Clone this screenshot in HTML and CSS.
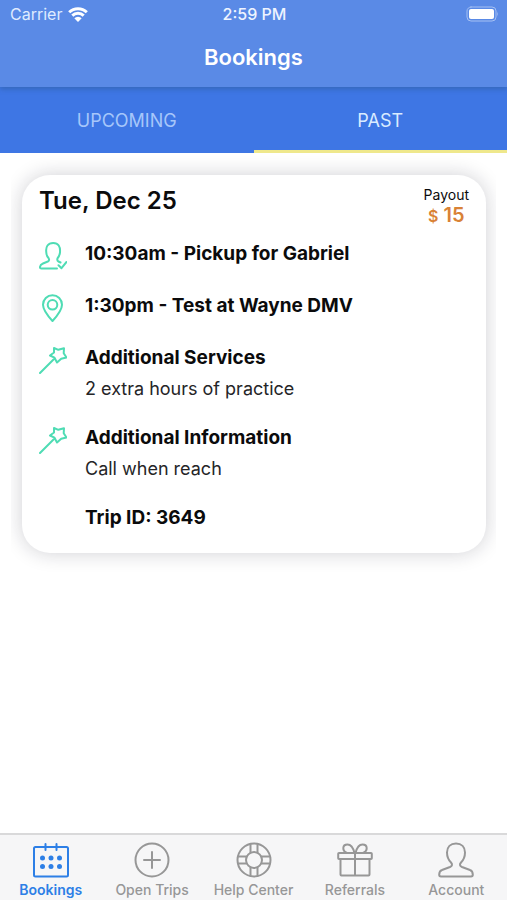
FILE: index.html
```html
<!DOCTYPE html>
<html lang="en">
<head>
<meta charset="utf-8">
<meta name="viewport" content="width=device-width, initial-scale=1">
<title>Bookings</title>
<link rel="stylesheet" href="styles.css">
</head>
<body>
<svg class="sprite" aria-hidden="true">
  <symbol id="wand" viewBox="0 0 28 28">
    <path d="M1 27 14.500 13.500M15 2l4.300 1.800L25 2.200l-.3 5L27.500 11.500l-5.300 1.200L18 16.500 15.500 11.700 11 9.500 15 6.500Z"/>
  </symbol>
</svg>
<header class="header">
  <div class="status">
    <div class="carrier">
      <span>Carrier</span>
      <svg class="wifi" viewBox="0 0 20 15" aria-hidden="true">
        <path d="M1.200 5.300a12.600 12.600 0 0 1 17.600 0M4.300 8.600a8.200 8.200 0 0 1 11.400 0"/>
        <path class="wifi-dot" d="M6.300 11.300a5.300 5.300 0 0 1 7.400 0L10 15Z"/>
      </svg>
    </div>
    <time class="clock">2:59 PM</time>
    <svg class="battery" viewBox="0 0 34 16" aria-hidden="true">
      <rect class="battery-shell" x="2" y="1" width="29" height="14" rx="4"/>
      <rect class="battery-level" x="4" y="3" width="25" height="10" rx="2"/>
      <path class="battery-tip" d="M32 5.500q1.500 2.500 0 5Z"/>
    </svg>
  </div>
  <h1 class="title">Bookings</h1>
</header>
<nav class="tabs" aria-label="Booking period">
  <button class="tab" type="button">UPCOMING</button>
  <button class="tab active" type="button">PAST</button>
</nav>
<main class="list">
  <article class="card">
    <div class="card-head">
      <h2 class="date">Tue, Dec 25</h2>
      <div class="payout">
        <span class="payout-label">Payout</span>
        <span class="amount"><span class="currency">$</span> 15</span>
      </div>
    </div>
    <div class="row">
      <svg class="icon" viewBox="0 0 28 28" aria-hidden="true">
        <path d="M18 26.500H2.500Q.8 26.500 1 24.800 1.300 22.700 4 21.500L8.800 19.500Q11 18.300 9.500 16 7.500 14 7.300 10.500C6.500 4.500 9 1 14.200 1S21.500 4.500 21 10.500Q20.500 14 18.700 16 17.600 18.500 19.500 19.500L21.500 20.500M19.500 23.200l3 3L27.500 20"/>
      </svg>
      <h3 class="item">10:30am - Pickup for Gabriel</h3>
    </div>
    <div class="row">
      <svg class="icon" viewBox="0 0 28 28" aria-hidden="true">
        <path d="M13.500 27Q4 16.500 4 10.700a9.500 9.500 0 0 1 19 0Q23 16.500 13.500 27Z"/><circle cx="13.500" cy="10.800" r="4.800"/>
      </svg>
      <h3 class="item">1:30pm - Test at Wayne DMV</h3>
    </div>
    <div class="row">
      <svg class="icon" aria-hidden="true"><use href="#wand"/></svg>
      <div>
        <h3 class="item">Additional Services</h3>
        <p class="note">2 extra hours of practice</p>
      </div>
    </div>
    <div class="row">
      <svg class="icon" aria-hidden="true"><use href="#wand"/></svg>
      <div>
        <h3 class="item">Additional Information</h3>
        <p class="note">Call when reach</p>
      </div>
    </div>
    <div class="row">
      <span class="icon"></span>
      <h3 class="item">Trip ID: 3649</h3>
    </div>
  </article>
</main>
<nav class="bar" aria-label="Main">
  <a class="link current" href="#bookings" aria-current="page">
    <svg class="bar-icon" viewBox="0 0 36 36" aria-hidden="true">
      <path d="M2.500 5h31Q35 5 35 6.500V33q0 1.500-1.500 1.500h-31Q1 34.500 1 33V6.500Q1 5 2.500 5ZM12.500 2v6M23.500 2v6"/>
      <g class="dots"><circle cx="9.500" cy="16" r="2.500"/><circle cx="18" cy="16" r="2.500"/><circle cx="26.500" cy="16" r="2.500"/><circle cx="9.500" cy="24.500" r="2.500"/><circle cx="18" cy="24.500" r="2.500"/><circle cx="26.500" cy="24.500" r="2.500"/></g>
    </svg>
    <span>Bookings</span>
  </a>
  <a class="link" href="#trips">
    <svg class="bar-icon" viewBox="0 0 36 36" aria-hidden="true">
      <circle cx="18" cy="18" r="16.500"/><path d="M18 10v16M10 18h16"/>
    </svg>
    <span>Open Trips</span>
  </a>
  <a class="link" href="#help">
    <svg class="bar-icon" viewBox="0 0 36 36" aria-hidden="true">
      <circle cx="18" cy="18" r="16.500"/><circle cx="18" cy="18" r="8"/>
      <path d="M14.500 2v8.800M21.500 2v8.800M14.500 25.200V34M21.500 25.200V34M2 14.500h8.800M2 21.500h8.800M25.200 14.500H34M25.200 21.500H34"/>
    </svg>
    <span>Help Center</span>
  </a>
  <a class="link" href="#referrals">
    <svg class="bar-icon" viewBox="0 0 36 36" aria-hidden="true">
      <path d="M2 11h32q.8 0 .8.800v4.400q0 .8-.8.800H2q-.8 0-.8-.8v-4.400Q1.200 11 2 11ZM3.500 17v15.500q0 1 1 1h27q1 0 1-1V17M18 11v22.500M17.500 11H10C5 9 5 2.500 10.500 2.500 14.500 2.500 16.500 7 17.500 11ZM18.500 11H26c5-2 5-8.500-.5-8.500C21.500 2.500 19.500 7 18.500 11Z"/>
    </svg>
    <span>Referrals</span>
  </a>
  <a class="link" href="#account">
    <svg class="bar-icon" viewBox="0 0 36 36" aria-hidden="true">
      <path d="M3 34.500Q1.200 34.500 1.200 32.800C1.200 30 1.500 28.800 4 28L12 25Q15.500 23.500 13 20.500C10.500 18 9 14.500 9 10.500 9 5 12.500 1.500 18 1.500S27 5 27 10.500C27 14.500 25.500 18 23 20.500Q20.500 23.500 24 25L32 28C34.500 28.800 34.800 30 34.800 32.800Q34.800 34.500 33 34.500Z"/>
    </svg>
    <span>Account</span>
  </a>
</nav>
</body>
</html>
```
FILE: styles.css
```css
* {
  box-sizing: border-box;
}

body {
  display: flex;
  flex-direction: column;
  min-height: 100vh;
  margin: 0;
  background: #fff;
  color: #0b0b0c;
  font-family: Inter, "Liberation Sans", sans-serif;
}

h1, h2, h3, p {
  margin: 0;
}

svg {
  fill: none;
  stroke-linecap: round;
  stroke-linejoin: round;
}

.sprite {
  position: absolute;
  width: 0;
  height: 0;
}

.header {
  position: relative;
  padding-bottom: 15px;
  background: #5a8ae6;
  box-shadow: 0 2px 5px rgba(40, 80, 120, 0.4);
  color: #fff;
}

.status {
  display: grid;
  grid-template-columns: 1fr auto 1fr;
  align-items: center;
  height: 28px;
  padding: 0 8px 0 10px;
  font-size: 16px;
}

.carrier {
  display: flex;
  align-items: center;
  gap: 6px;
  color: #dfebff;
}

.wifi {
  width: 20px;
  height: 15px;
  stroke: #fff;
  stroke-width: 3;
  stroke-linecap: butt;
}

.wifi-dot {
  fill: #fff;
  stroke: none;
}

.clock {
  color: #eef4ff;
  font-weight: 500;
}

.battery {
  justify-self: end;
  width: 34px;
  height: 16px;
}

.battery-shell {
  stroke: #a5c0f3;
}

.battery-level {
  fill: #fff;
}

.battery-tip {
  fill: #a5c0f3;
}

.title {
  padding-top: 14px;
  font-size: 22px;
  font-weight: 600;
  line-height: 30px;
  text-align: center;
}

.tabs {
  display: flex;
  background: #3e76e4;
}

.tab {
  flex: 1;
  height: 66px;
  padding: 3px 0 0;
  border: 0;
  border-bottom: 3px solid transparent;
  background: none;
  color: #a6c6fa;
  font: 400 18px Inter, "Liberation Sans", sans-serif;
}

.tab.active {
  border-bottom-color: #efe88c;
  color: #d9ebff;
}

.list {
  flex: 1;
  margin: 0 11px;
  padding: 22px 10px 22px 11px;
  overflow: hidden;
}

.card {
  padding: 10px 17px 18px;
  border-radius: 28px;
  box-shadow: 0 0 20px rgba(20, 20, 40, 0.2);
}

.card-head {
  display: flex;
  justify-content: space-between;
  margin-bottom: 14px;
}

.date {
  font-size: 24px;
  font-weight: 600;
  line-height: 32px;
}

.payout {
  display: flex;
  flex-direction: column;
  align-items: center;
  font-size: 14px;
  line-height: 20px;
}

.amount {
  color: #d98236;
  font-size: 20px;
  font-weight: 600;
}

.currency {
  font-size: 16px;
}

.row {
  display: flex;
  gap: 18px;
  min-height: 31px;
  margin-bottom: 21px;
}

.row:last-child {
  margin-bottom: 0;
}

.icon {
  flex: none;
  width: 28px;
  height: 28px;
  margin-top: 2px;
  stroke: #4fdcb4;
  stroke-width: 2;
}

.item {
  font-size: 19px;
  font-weight: 700;
  line-height: 28px;
}

.note {
  margin-top: 3px;
  color: #252527;
  font-size: 18px;
  line-height: 28px;
}

.bar {
  display: flex;
  height: 67px;
  border-top: 2px solid #d9d9da;
  background: #f6f6f7;
}

.link {
  display: flex;
  flex: 1;
  flex-direction: column;
  align-items: center;
  gap: 2px;
  padding-top: 7px;
  color: #979797;
  font-size: 14px;
  font-weight: 500;
  line-height: 20px;
  text-decoration: none;
  white-space: nowrap;
}

.link.current {
  color: #2d7fe6;
  font-weight: 600;
}

.bar-icon {
  flex: none;
  width: 36px;
  height: 36px;
  stroke: currentColor;
  stroke-width: 2;
}

.dots {
  fill: currentColor;
  stroke: none;
}
```
